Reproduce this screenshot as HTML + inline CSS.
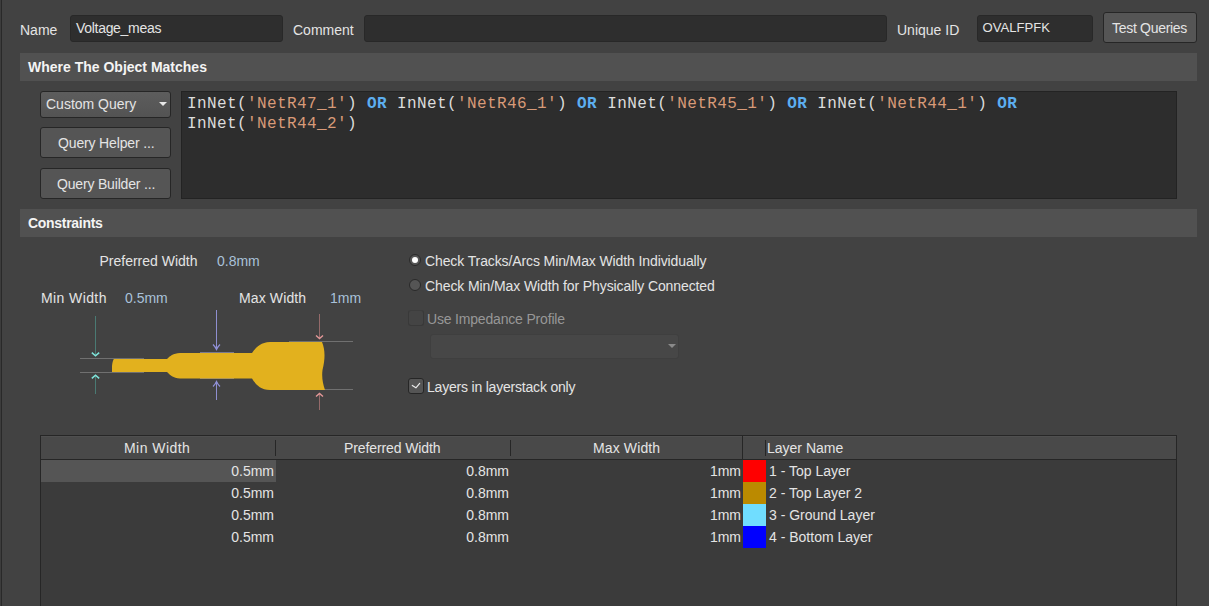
<!DOCTYPE html>
<html><head><meta charset="utf-8">
<style>
html,body{margin:0;padding:0;}
body{width:1209px;height:606px;overflow:hidden;background:#424242;position:relative;font-family:"Liberation Sans",sans-serif;font-size:14px;color:#e4e4e4;}
.a{position:absolute;}
.t{position:absolute;white-space:nowrap;line-height:16px;}
.inp{position:absolute;box-sizing:border-box;background:#2e2e2e;border:1px solid #282828;border-radius:3px;}
.btn{position:absolute;box-sizing:border-box;background:#555555;border:1px solid #262626;border-radius:3px;}
.hdr{position:absolute;left:20px;width:1177px;height:28px;background:#515151;}
.hdr span{position:absolute;left:8px;line-height:16px;font-weight:bold;font-size:14px;color:#f4f4f4;white-space:nowrap;}
.code{position:absolute;box-sizing:border-box;background:#2d2d2d;border:1px solid #232323;}
.mono{font-family:"Liberation Mono",monospace;font-size:16px;letter-spacing:0.4px;color:#dcdcdc;white-space:pre;position:absolute;line-height:20px;}
.kw{color:#5caef0;font-weight:bold;}
.st{color:#d89a78;}
.val{color:#a9c1d9;}
.sep{position:absolute;top:440px;width:1px;height:16px;background:#262626;}
.cell{position:absolute;white-space:nowrap;text-align:right;}
</style></head>
<body>
<div class="a" style="left:0;top:0;width:1px;height:606px;background:#3c3c3c"></div>
<div class="a" style="left:1px;top:0;width:1px;height:606px;background:#292929"></div>

<!-- top row -->
<div class="t" style="left:20px;top:22px">Name</div>
<div class="inp" style="left:70px;top:15px;width:213px;height:27px"></div>
<div class="t" style="left:76px;top:20px;letter-spacing:-0.3px">Voltage_meas</div>
<div class="t" style="left:293px;top:22px">Comment</div>
<div class="inp" style="left:364px;top:15px;width:523px;height:27px"></div>
<div class="t" style="left:897px;top:22px">Unique ID</div>
<div class="inp" style="left:977px;top:15px;width:116px;height:27px"></div>
<div class="t" style="left:982.5px;top:20px;font-size:13.1px">OVALFPFK</div>
<div class="btn" style="left:1103px;top:12px;width:94px;height:31px"></div>
<div class="t" style="left:1112px;top:20px;letter-spacing:-0.3px">Test Queries</div>

<!-- where header -->
<div class="hdr" style="top:53px"><span style="top:6px">Where The Object Matches</span></div>

<div class="btn" style="left:40px;top:91px;width:131px;height:27px;background:linear-gradient(#5d5d5d,#535353)"></div>
<div class="t" style="left:46px;top:96px">Custom Query</div>
<svg class="a" style="left:158px;top:101px" width="10" height="6"><path d="M1 1 L9 1 L5 5 Z" fill="#e8e8e8"/></svg>
<div class="btn" style="left:40px;top:127px;width:131px;height:31px"></div>
<div class="t" style="left:58px;top:135px;letter-spacing:-0.15px">Query Helper ...</div>
<div class="btn" style="left:40px;top:168px;width:131px;height:31px"></div>
<div class="t" style="left:57px;top:176px;letter-spacing:-0.18px">Query Builder ...</div>

<div class="code" style="left:181px;top:91px;width:996px;height:108px"></div>
<div class="mono" style="left:187px;top:94px">InNet(<span class="st">'NetR47_1'</span>) <span class="kw">OR</span> InNet(<span class="st">'NetR46_1'</span>) <span class="kw">OR</span> InNet(<span class="st">'NetR45_1'</span>) <span class="kw">OR</span> InNet(<span class="st">'NetR44_1'</span>) <span class="kw">OR</span>
InNet(<span class="st">'NetR44_2'</span>)</div>

<!-- constraints header -->
<div class="hdr" style="top:209px"><span style="top:6px;letter-spacing:-0.3px">Constraints</span></div>

<div class="t" style="left:99.5px;top:253px">Preferred Width</div>
<div class="t val" style="left:217px;top:253px">0.8mm</div>
<div class="t" style="left:41px;top:290px;letter-spacing:0.4px">Min Width</div>
<div class="t val" style="left:125px;top:290px">0.5mm</div>
<div class="t" style="left:239px;top:290px;letter-spacing:0.12px">Max Width</div>
<div class="t val" style="left:330px;top:290px">1mm</div>

<!-- trace drawing -->
<svg class="a" style="left:0;top:300px" width="380" height="120" viewBox="0 300 380 120">
  <g stroke-width="1" fill="none">
    <line x1="80" y1="358.5" x2="144" y2="358.5" stroke="#707070"/>
    <line x1="80" y1="372.5" x2="144" y2="372.5" stroke="#707070"/>
    <line x1="95.5" y1="316" x2="95.5" y2="355" stroke="#4a7a73"/>
    <path d="M91.8 352.6 L95.5 355.8 L99.2 352.6" stroke="#7fe4da" stroke-width="1.5"/>
    <line x1="95.5" y1="376" x2="95.5" y2="394" stroke="#4a7a73"/>
    <path d="M91.8 378.4 L95.5 375.2 L99.2 378.4" stroke="#7fe4da" stroke-width="1.5"/>
    <line x1="200" y1="352.5" x2="234" y2="352.5" stroke="#7a7a90"/>
    <line x1="200" y1="378.5" x2="234" y2="378.5" stroke="#7a7a90"/>
    <line x1="216.5" y1="310" x2="216.5" y2="349" stroke="#8f8fd0"/>
    <path d="M213 344.5 Q215.5 347 216.5 349.5 Q217.5 347 220 344.5" stroke="#9090d8" stroke-width="1.2"/>
    <line x1="216.5" y1="382" x2="216.5" y2="400" stroke="#8f8fd0"/>
    <path d="M213 386.5 Q215.5 384 216.5 381.5 Q217.5 384 220 386.5" stroke="#9090d8" stroke-width="1.2"/>
    <line x1="289" y1="341.5" x2="353" y2="341.5" stroke="#707070"/>
    <line x1="289" y1="389.5" x2="353" y2="389.5" stroke="#707070"/>
    <line x1="319.5" y1="314" x2="319.5" y2="338" stroke="#946a6a"/>
    <path d="M316 335.5 L319.5 338.5 L323 335.5" stroke="#e49898" stroke-width="1.4"/>
    <line x1="319.5" y1="394" x2="319.5" y2="410" stroke="#946a6a"/>
    <path d="M316 396.5 L319.5 393.5 L323 396.5" stroke="#e49898" stroke-width="1.4"/>
  </g>
  <path fill="#e2b11e" d="M113.8 359 L167 359 C170 356 173 353.5 180 353 L252 353 C255 349 259 342.5 270 342 L322 342 C325 349 325.5 358 322.5 370 C321.5 378 323 384 325 390 L270 390 C259 389.5 255 383 252 378.5 L180 378.5 C173 378 170 375 167 372 L112 372 L112 366 C112.3 362.5 113 360.5 113.8 359 Z"/>
</svg>

<!-- radios -->
<div class="a" style="left:409px;top:254px;width:12px;height:12px;box-sizing:border-box;border-radius:50%;background:#555;border:1px solid #2a2a2a"></div>
<div class="a" style="left:412px;top:257px;width:6px;height:6px;border-radius:50%;background:#fff"></div>
<div class="t" style="left:425px;top:253px;letter-spacing:-0.11px">Check Tracks/Arcs Min/Max Width Individually</div>
<div class="a" style="left:409px;top:279px;width:12px;height:12px;box-sizing:border-box;border-radius:50%;background:#555;border:1px solid #2a2a2a"></div>
<div class="t" style="left:425px;top:278px;letter-spacing:-0.1px">Check Min/Max Width for Physically Connected</div>

<div class="a" style="left:408px;top:310px;width:16px;height:16px;box-sizing:border-box;border-radius:3px;background:#444;border:1px solid #393939;border-top-color:#3d3d3d"></div>
<div class="t" style="left:427px;top:311px;color:#979797;letter-spacing:-0.18px">Use Impedance Profile</div>
<div class="a" style="left:430px;top:334px;width:249px;height:25px;box-sizing:border-box;border-radius:3px;background:#474747;border:1px solid #3f3f3f"></div>
<svg class="a" style="left:667px;top:343px" width="10" height="6"><path d="M1 1 L9 1 L5 5 Z" fill="#8a8a8a"/></svg>

<div class="a" style="left:408px;top:378px;width:16px;height:16px;box-sizing:border-box;border-radius:3px;background:#555;border:1px solid #262626"></div>
<svg class="a" style="left:408px;top:378px" width="16" height="16"><path d="M4.3 7.4 L7.9 9.8 L11.7 5.4" stroke="#ececec" stroke-width="1.15" fill="none" stroke-linecap="round" stroke-linejoin="round"/></svg>
<div class="t" style="left:427px;top:379px;letter-spacing:-0.2px">Layers in layerstack only</div>

<!-- table -->
<div class="a" style="left:40px;top:435px;width:1137px;height:200px;box-sizing:border-box;background:#3b3b3b;border:1px solid #262626"></div>
<div class="a" style="left:41px;top:436px;width:1135px;height:23px;background:#494949;border-top:1px solid #4f4f4f;box-sizing:border-box"></div>
<div class="a" style="left:41px;top:459px;width:1135px;height:1px;background:#262626"></div>
<div class="sep" style="left:275px"></div>
<div class="sep" style="left:510px"></div>
<div class="a" style="left:742px;top:436px;width:1px;height:24px;background:#262626"></div>
<div class="sep" style="left:765px"></div>
<div class="t" style="left:124px;top:440px;letter-spacing:0.45px">Min Width</div>
<div class="t" style="left:344px;top:440px;letter-spacing:-0.1px">Preferred Width</div>
<div class="t" style="left:593px;top:440px;letter-spacing:0.12px">Max Width</div>
<div class="t" style="left:767px;top:440px">Layer Name</div>

<div class="a" style="left:41px;top:460px;width:235px;height:22px;background:#555"></div>
<div class="a" style="left:743px;top:460px;width:23px;height:22px;background:#ff0000"></div>
<div class="a" style="left:743px;top:482px;width:23px;height:22px;background:#bb8a00"></div>
<div class="a" style="left:743px;top:504px;width:23px;height:22px;background:#70ddff"></div>
<div class="a" style="left:743px;top:526px;width:23px;height:22px;background:#0000ff"></div>

<div class="cell" style="left:0;width:274px;top:463px">0.5mm</div>
<div class="cell" style="left:0;width:274px;top:485px">0.5mm</div>
<div class="cell" style="left:0;width:274px;top:507px">0.5mm</div>
<div class="cell" style="left:0;width:274px;top:529px">0.5mm</div>
<div class="cell" style="left:300px;width:209px;top:463px">0.8mm</div>
<div class="cell" style="left:300px;width:209px;top:485px">0.8mm</div>
<div class="cell" style="left:300px;width:209px;top:507px">0.8mm</div>
<div class="cell" style="left:300px;width:209px;top:529px">0.8mm</div>
<div class="cell" style="left:600px;width:141px;top:463px">1mm</div>
<div class="cell" style="left:600px;width:141px;top:485px">1mm</div>
<div class="cell" style="left:600px;width:141px;top:507px">1mm</div>
<div class="cell" style="left:600px;width:141px;top:529px">1mm</div>
<div class="t" style="left:769px;top:463px">1 - Top Layer</div>
<div class="t" style="left:769px;top:485px">2 - Top Layer 2</div>
<div class="t" style="left:769px;top:507px">3 - Ground Layer</div>
<div class="t" style="left:769px;top:529px">4 - Bottom Layer</div>
</body></html>
